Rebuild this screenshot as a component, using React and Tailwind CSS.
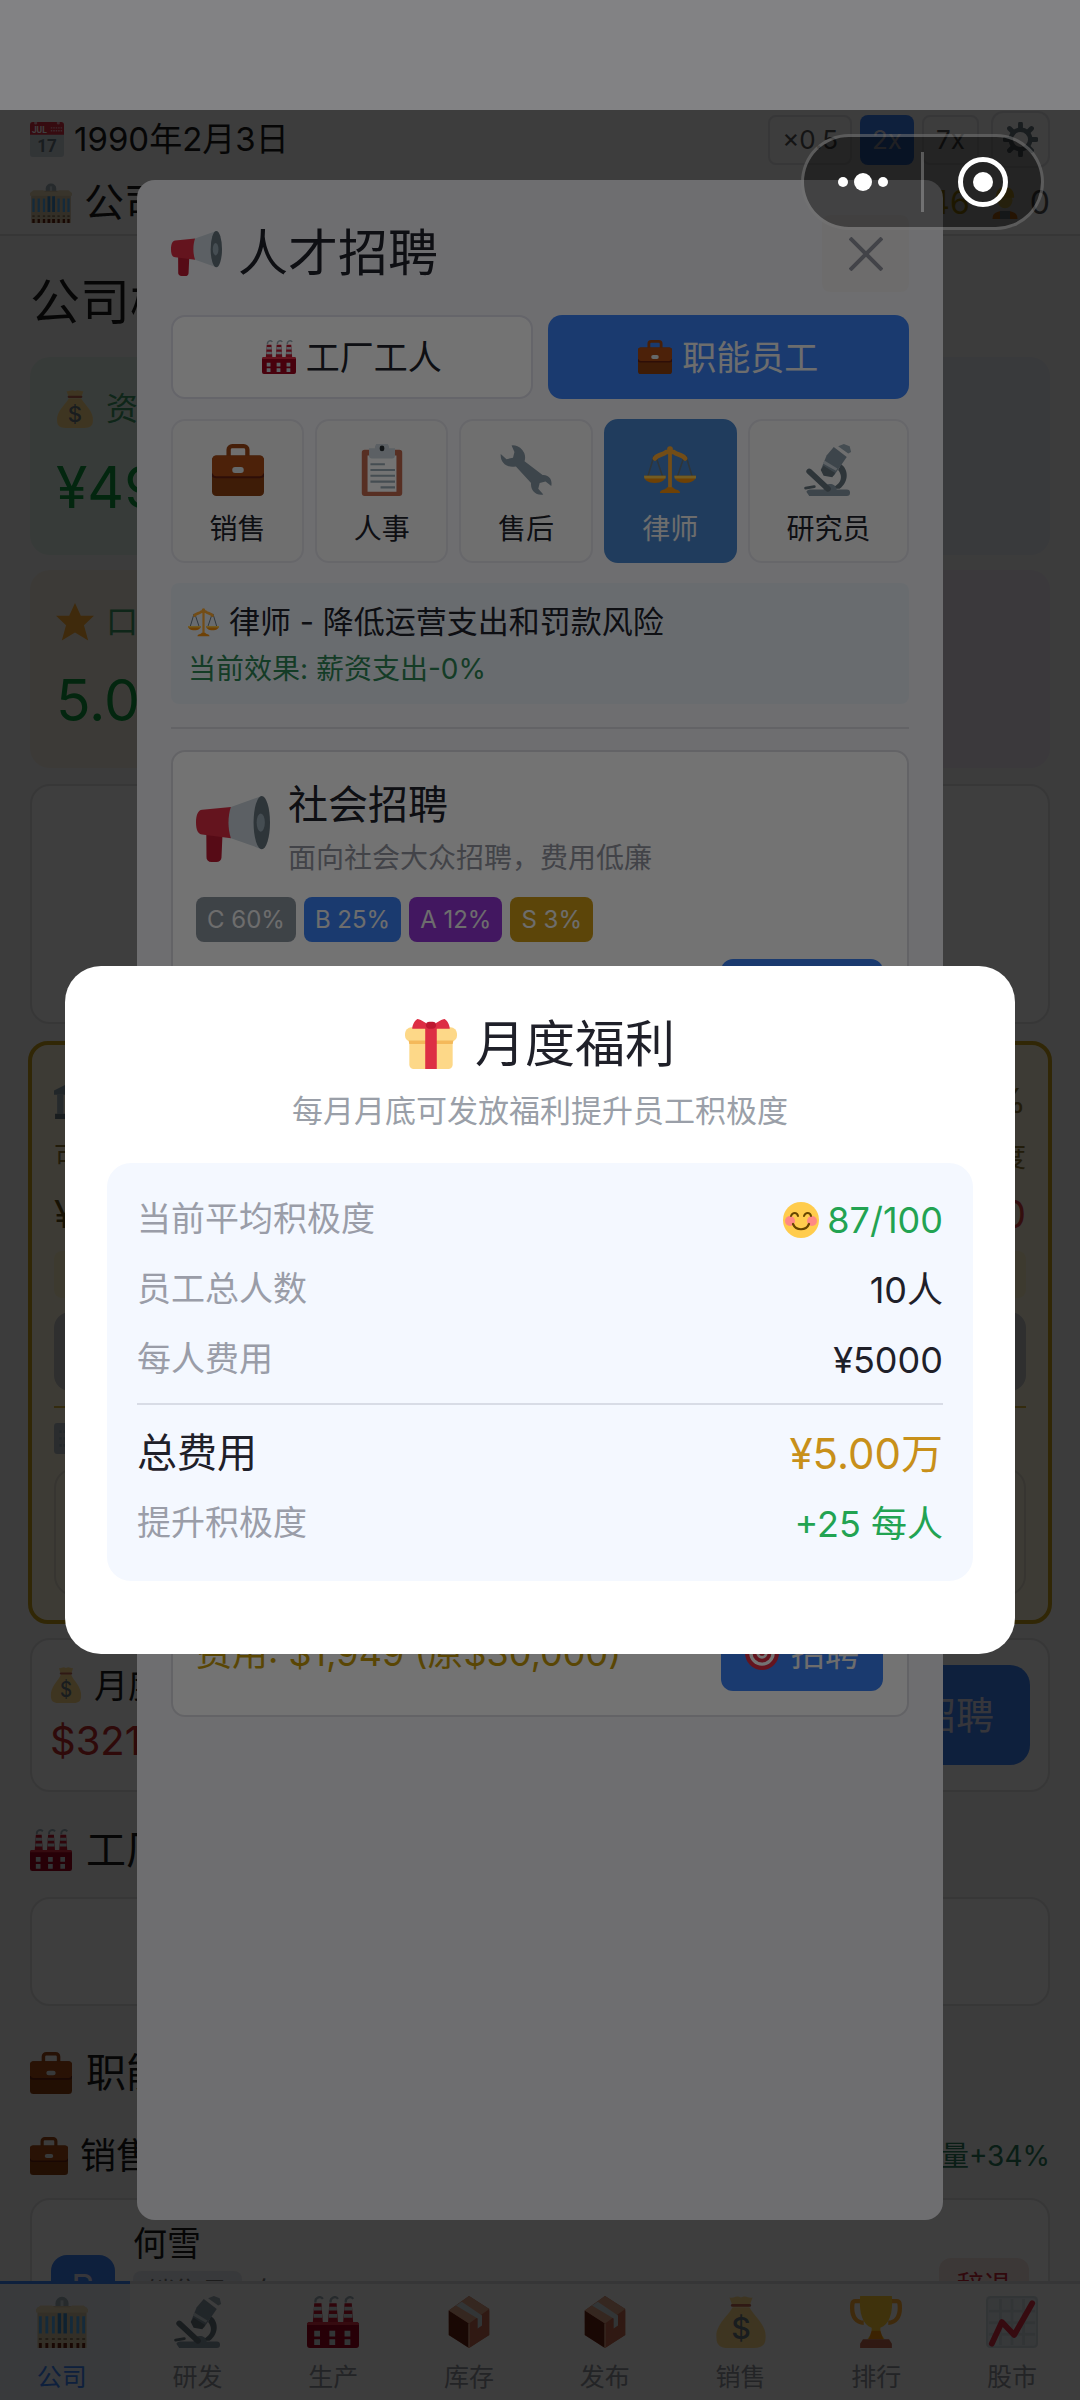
import { useState } from 'react';

const ICONS = {
  calendar: (
    <>
      <rect x="0" y="6" width="36" height="30" rx="3" fill="#ccd6dd" />
      <path d="M3 0h30a3 3 0 0 1 3 3v10H0V3a3 3 0 0 1 3-3z" fill="#dd2e44" />
      <circle cx="6" cy="1" r="1.6" fill="#f4abba" />
      <circle cx="30" cy="1" r="1.6" fill="#f4abba" />
      <path d="M22 6h12M22 9h12" stroke="#f4abba" strokeWidth="1.4" strokeDasharray="1.6 1" />
      <text x="2" y="11.5" fontSize="9" fontWeight="bold" fill="#fff" fontFamily="Roboto, sans-serif">JUL</text>
      <text x="18" y="31" fontSize="18" fontWeight="bold" textAnchor="middle" fill="#66757f" fontFamily="Roboto, sans-serif">17</text>
    </>
  ),
  building: (
    <>
      <path d="M13.500 8V5a4.500 4.500 0 0 1 9 0v3z" fill="#99aab5" />
      <path d="M17 3h2v5h-2z" fill="#ccd6dd" />
      <path d="M1 8l10-1h14l10 1v28H1z" fill="#d0c0a0" />
      <path d="M0 9l3-2.500h8L13 8h10l2-1.500h8L36 9v2.500H0z" fill="#e4d4b0" />
      <path d="M2 14h2v12H2zM6.500 14h2v12h-2zM11 14h2v12h-2zM23.500 14h2v12h-2zM28 14h2v12h-2zM32 14h2v12h-2z" fill="#55acee" />
      <path d="M15 12h2.400v14H15zM19 12h2.400v14H19z" fill="#3b88c3" />
      <path d="M2 29h2v1.500H2zM6.500 29h2v1.500h-2zM11 29h2v1.500h-2zM15 29h2.400v1.500H15zM19 29h2.400v1.500H19zM23.500 29h2v1.500h-2zM28 29h2v1.500h-2zM32 29h2v1.500h-2z" fill="#8c7a60" />
      <path d="M2 32.500h2V36H2zM6.500 32.500h2V36h-2zM11 32.500h2V36h-2zM15 32.500h2.400V36H15zM19 32.500h2.400V36H19zM23.500 32.500h2V36h-2zM28 32.500h2V36h-2zM32 32.500h2V36h-2z" fill="#662113" />
    </>
  ),
  megaphone: (
    <>
      <path d="M5 18h8l-.6 15.500a2.500 2.500 0 0 1-2.500 2.500H7.500a2.500 2.500 0 0 1-2.400-2.800z" fill="#be1931" />
      <path d="M3 7.500l14-1.500v17L3 21C1 21 0 18.500 0 14.500s1-7 3-7z" fill="#dd2e44" />
      <path d="M17 6L32 0v29L17 23c-1.600-5-1.600-12 0-17z" fill="#ccd6dd" />
      <ellipse cx="32" cy="14.500" rx="4" ry="14.500" fill="#66757f" />
      <ellipse cx="31.500" cy="14.500" rx="2" ry="5" fill="#99aab5" />
    </>
  ),
  factory: (
    <>
      <path d="M5 5h5l1 14H4zM15.500 5h5l1 14h-7zM26 5h5l1 14h-7z" fill="#be1931" />
      <path d="M4.800 7.500h5.400V10H4.800zM4.600 12.500h5.800V15H4.600zM15.300 7.500h5.400V10h-5.400zM15.100 12.500h5.800V15h-5.800zM25.800 7.500h5.400V10h-5.400zM25.600 12.500h5.800V15h-5.800z" fill="#ccd6dd" />
      <path d="M6 4.500c-1-3 3-5 5-2.500M16.500 4.500c-1-3 3-5 5-2.500M27 4.500c-1-3 3-5 5-2.500" stroke="#99aab5" strokeWidth="1.600" fill="none" />
      <rect y="18" width="36" height="18" rx="2" fill="#a0041e" />
      <path d="M0 20a2 2 0 0 1 2-2h32a2 2 0 0 1 2 2z" fill="#dd2e44" />
      <path d="M5 24h4v4H5zM15.500 24h4v4h-4zM26 24h4v4h-4zM5 30h4v4H5zM15.500 30h4v4h-4zM26 30h4v4h-4z" fill="#ccd6dd" />
    </>
  ),
  briefcase: (
    <>
      <path d="M11.500 9V4a2.500 2.500 0 0 1 2.500-2.500h8A2.500 2.500 0 0 1 24.500 4v5" stroke="#9c4616" strokeWidth="3" fill="none" />
      <rect y="8" width="36" height="28" rx="3" fill="#8a3e10" />
      <path d="M0 11a3 3 0 0 1 3-3h30a3 3 0 0 1 3 3v10c0 1.500-1.500 2-3 2H3c-1.500 0-3-.5-3-2z" fill="#a84a16" />
      <path d="M0 20.500c0 2 1.500 2.500 3 2.500h30c1.500 0 3-.5 3-2.500" stroke="#662113" strokeWidth="1.400" fill="none" />
      <rect x="14" y="16" width="8" height="4" rx="2" fill="#e1e8ed" />
    </>
  ),
  clipboard: (
    <>
      <rect x="4" y="4" width="28" height="32" rx="2" fill="#c1694f" />
      <path d="M8 8h20v25H8z" fill="#fff" />
      <path d="M9 3h4a5 5 0 0 1 10 0h4v5a2 2 0 0 1-2 2H11a2 2 0 0 1-2-2z" fill="#ccd6dd" />
      <rect x="16.400" y="1" width="3.200" height="4" rx="1.600" fill="#292f33" />
      <path d="M10 14h10M10 18h17M10 22h17M10 26h17M17 30h10" stroke="#99aab5" strokeWidth="1.500" />
    </>
  ),
  wrench: (
    <>
      <path
        d="M8 1a8.500 8.500 0 0 1 9 11l12.500 9.500c4-.5 7 3 6 7.500l-4-3-4 1-1 4 3.500 4c-5 1-9-2.500-8.500-8L11 15.500C5 17 0 13 .5 7l4 3.500 4.500-1 1-4z"
        fill="#8899a6"
      />
    </>
  ),
  scales: (
    <>
      <path d="M7 8L2.500 23M8 8l5 15M28 8l-5 15M29 8l4.500 15" stroke="#66757f" strokeWidth="1.100" />
      <path d="M7.500 10c2-3 5-2 8-4.500h5c3 2.500 6 1.500 8 4.500" stroke="#ffac33" strokeWidth="3.200" fill="none" strokeLinecap="round" />
      <circle cx="18" cy="3.500" r="2" fill="#ffac33" />
      <path d="M16.700 3h2.600v28h-2.600z" fill="#ffac33" />
      <path d="M0 22h15c0 3-3 5-7.500 5S0 25 0 22zM21 22h15c0 3-3 5-7.500 5S21 25 21 22z" fill="#f4900c" />
      <path d="M0 22h15v1.800H.3zM21 22h15v1.800H21.300z" fill="#ffcc4d" />
      <path d="M11 34c0-2.500 4-2 5-4h4c1 2 5 1.500 5 4z" fill="#f4900c" />
    </>
  ),
  microscope: (
    <>
      <path d="M27 14c5 3 6 12-1 17h-8c9-2 11-8 7-13z" fill="#66757f" />
      <path d="M3 33a3 3 0 0 1 3-1.500h9c1-5 8-5 9 0h7a2.200 2.200 0 0 1 0 4.500H5z" fill="#8899a6" />
      <path d="M5 19l13 12" stroke="#66757f" strokeWidth="4" strokeLinecap="round" />
      <path d="M2.500 30.500l6-1" stroke="#66757f" strokeWidth="2" strokeLinecap="round" />
      <path d="M17 8l5-6 9 7-9 13-9-4z" fill="#8899a6" />
      <path d="M13 18l2-3 8 5-2 3-6-1z" fill="#66757f" />
      <path d="M14.500 13.500l9 5 1-1.500-9-5.500z" fill="#ccd6dd" />
      <path d="M25 1.500l7 5 2-1-1-4-4-1.500z" fill="#99aab5" />
    </>
  ),
  box: (
    <>
      <path d="M18 0l14 9v18L18 36 4 27V10z" fill="#c1694f" />
      <path d="M4 10l14 9v17L4 27z" fill="#662113" />
      <path d="M18 19l14-9v17l-14 9z" fill="#c1694f" />
      <path d="M18 0l14 9-14 10L4 10z" fill="#d99e82" />
      <path d="M9 6.500l4-2.500 14 9.500v7l-3 2v-7z" fill="#ccd6dd" />
      <path d="M18 19v17" stroke="#d99e82" strokeWidth="1" />
    </>
  ),
  money: (
    <>
      <path d="M10 1c3 1 4-2 8 0 4-2 5 1 8 0l-2.500 7h-11z" fill="#fdd888" />
      <path d="M12 8h12c2 5 12 12 11 21 0 5-3 7-8 7H9c-5 0-8-2-8-7C0 20 10 13 12 8z" fill="#fdd888" />
      <path d="M12 6.500h12" stroke="#bf6952" strokeWidth="2" strokeLinecap="round" />
      <text x="18" y="30" fontSize="21" fontWeight="500" textAnchor="middle" fill="#67757f" fontFamily="Inter, sans-serif">$</text>
    </>
  ),
  trophy: (
    <>
      <path d="M8 3.500H3.500c-2 0-2 2-2 5 0 6 3 10 8 10M28 3.500h4.500c2 0 2 2 2 5 0 6-3 10-8 10" stroke="#ffac33" strokeWidth="3" fill="none" />
      <path d="M7 0h22c1 12-2 20-8 22v4l3 4H12l3-4v-4C9 20 6 12 7 0z" fill="#ffcc33" />
      <path d="M15 24h6l2 6H13z" fill="#f4900c" />
      <path d="M9 30h18l2 3v3H7v-3z" fill="#c1694f" />
    </>
  ),
  chart: (
    <>
      <rect width="36" height="36" rx="3" fill="#ccd6dd" />
      <rect x="1.500" y="1.500" width="33" height="33" rx="2" fill="#e1e8ed" />
      <path d="M2 10.500h32M2 18.500h32M2 26.500h32M10 2v32M18 2v32M26 2v32" stroke="#ccd6dd" strokeWidth="2" />
      <path d="M4 33l7-15 8.500 9L32 5" stroke="#dd2e44" strokeWidth="4" fill="none" strokeLinecap="round" strokeLinejoin="round" />
    </>
  ),
  gift: (
    <>
      <path d="M3 14h30v19a3 3 0 0 1-3 3H6a3 3 0 0 1-3-3z" fill="#fdd888" />
      <rect y="6" width="36" height="10.500" rx="4.500" fill="#fdd888" />
      <path d="M2.500 15.500h31L33 18H3z" fill="#f4b95a" />
      <path d="M18 7H5C5 4 7 1 8.500 0 11 0 14 3 18 5c4-2 7-5 9.500-5C29 1 31 4 31 7z" fill="#dd2e44" />
      <path d="M14 5h8v31h-8z" fill="#dd2e44" />
      <rect x="14.500" y="2" width="7" height="5" rx="2.500" fill="#be1931" />
    </>
  ),
  smile: (
    <>
      <circle cx="18" cy="18" r="18" fill="#ffcc4d" />
      <circle cx="7" cy="19" r="5" fill="#ff7892" opacity=".8" />
      <circle cx="29" cy="19" r="5" fill="#ff7892" opacity=".8" />
      <path d="M8 14c1.500-4 6-4 7 0M21 14c1.500-4 6-4 7 0" stroke="#664500" strokeWidth="2" fill="none" strokeLinecap="round" />
      <path d="M10 22c3 7 13 7 16 0" stroke="#664500" strokeWidth="2.200" fill="none" strokeLinecap="round" />
    </>
  ),
  target: (
    <>
      <circle cx="18" cy="18" r="18" fill="#dd2e44" />
      <circle cx="18" cy="18" r="13.500" fill="#fff" />
      <circle cx="18" cy="18" r="10" fill="#dd2e44" />
      <circle cx="18" cy="18" r="6" fill="#fff" />
      <circle cx="18" cy="18" r="3" fill="#dd2e44" />
    </>
  ),
  star: <path d="M18 0l5.500 12H36l-9.500 9 4 14.500L18 28 5.500 35.500l4-14.500L0 12h12.500z" fill="#ffac33" />,
  bank: (
    <>
      <path d="M18 0l18 9v4H0V9z" fill="#8899a6" />
      <path d="M3 13h6v18H3zM15 13h6v18h-6zM27 13h6v18h-6z" fill="#99aab5" />
      <path d="M1 31h34v5H1z" fill="#66757f" />
    </>
  ),
  worker: (
    <>
      <path d="M3 36c0-7 5-9 15-9s15 2 15 9z" fill="#ff8a1c" />
      <path d="M12 27h12v9H12z" fill="#8fa3b0" />
      <circle cx="18" cy="15" r="9" fill="#ffdc5d" />
      <path d="M7 12C7 4 11 0 18 0s11 4 11 12z" fill="#ffcc33" />
    </>
  ),
  gear: (
    <>
      <path
        d="M18 2v32M2 18h32M6.700 6.700l22.600 22.600M29.300 6.700L6.700 29.300"
        stroke="#66757f"
        strokeWidth="5"
        strokeLinecap="round"
      />
      <circle cx="18" cy="18" r="10" fill="#f8f8f8" stroke="#66757f" strokeWidth="4.500" />
    </>
  ),
  list: (
    <>
      <rect width="36" height="36" rx="4" fill="#a9b5bb" />
      <path d="M7 10h22M7 18h22M7 26h22" stroke="#8c9eaa" strokeWidth="3" strokeDasharray="3 2" />
    </>
  ),
};

function Icon({ name, className }) {
  return (
    <svg viewBox="0 0 36 36" preserveAspectRatio="none" aria-hidden="true" className={`shrink-0 ${className}`}>
      {ICONS[name]}
    </svg>
  );
}

const ROLES = [
  { icon: 'briefcase', label: '销售' },
  { icon: 'clipboard', label: '人事' },
  { icon: 'wrench', label: '售后' },
  { icon: 'scales', label: '律师' },
  { icon: 'microscope', label: '研究员' },
];

const CHANNELS = [
  { name: '社会招聘', desc: '面向社会大众招聘，费用低廉', cost: '费用: $325 (原$5,000)' },
  { name: '校园招聘', desc: '面向高校毕业生招聘', cost: '费用: $974 (原$15,000)' },
  { name: '猎头招聘', desc: '专业猎头推荐人才', cost: '费用: $1,949 (原$30,000)' },
];

const GRADES = [
  { label: 'C 60%', color: 'bg-[#8b949e]' },
  { label: 'B 25%', color: 'bg-[#3b82f6]' },
  { label: 'A 12%', color: 'bg-[#9333d6]' },
  { label: 'S 3%', color: 'bg-[#cc9a16]' },
];

const NAV = [
  { icon: 'building', label: '公司' },
  { icon: 'microscope', label: '研发' },
  { icon: 'factory', label: '生产' },
  { icon: 'box', label: '库存' },
  { icon: 'box', label: '发布' },
  { icon: 'money', label: '销售' },
  { icon: 'trophy', label: '排行' },
  { icon: 'chart', label: '股市' },
];

function Header() {
  return (
    <header className="shrink-0 border-b-2 border-[#dcdcdc] bg-[#f6f6f6] px-[30px] pt-px">
      <div className="flex h-[57px] items-center justify-between">
        <div className="flex items-center gap-[10px] text-[33px]">
          <Icon name="calendar" className="h-[35px] w-[34px]" />
          1990年2月3日
        </div>
        <div className="flex items-center gap-2 text-[26px] text-[#555]">
          <button className="h-[50px] rounded-lg border-2 border-[#dedee2] px-3">×0.5</button>
          <button className="h-[50px] rounded-lg bg-[#3b82f6] px-3 text-[#dde]">2x</button>
          <button className="h-[50px] rounded-lg border-2 border-[#dedee2] px-3">7x</button>
          <button aria-label="设置" className="ml-1 flex h-[57px] w-[59px] items-center justify-center rounded-xl border-2 border-[#dedee2]">
            <Icon name="gear" className="size-[35px]" />
          </button>
        </div>
      </div>
      <div className="mt-1 flex h-[62px] items-center justify-between">
        <div className="flex items-center gap-3 text-[40px]">
          <Icon name="building" className="h-[40px] w-[42px]" />
          公司
        </div>
        <div className="flex items-center text-[32px]">
          <span className="text-[#c8a000]">46</span>
          <Icon name="worker" className="ml-5 h-[32px] w-[30px]" />
          <span className="ml-[10px] text-[#555]">0</span>
        </div>
      </div>
    </header>
  );
}

function StatCard({ icon, label, value, tone }) {
  return (
    <div className={`rounded-[20px] px-[26px] pt-7 pb-[35px] ${tone}`}>
      <div className="flex h-12 items-center gap-3 text-[32px] text-[#3f9d68]">
        {icon && <Icon name={icon} className="size-[38px]" />}
        {label}
      </div>
      <div className="mt-[23px] h-16 text-[57px] leading-[64px] text-[#0f9d40]">{value}</div>
    </div>
  );
}

function LoanCard() {
  return (
    <section className="-mx-0.5 mt-[17px] shrink-0 rounded-[20px] border-4 border-[#c79f1c] bg-[#f8efd9] px-[22px] pt-[23px] pb-6">
      <div className="flex h-16 items-center justify-between text-[34px] text-[#8a7430]">
        <Icon name="bank" className="size-[38px]" />
        <span>5%</span>
      </div>
      <div className="flex h-[50px] items-center justify-between text-[28px] text-[#8a7430]">
        <span>可贷</span>
        <span>额度</span>
      </div>
      <div className="flex h-16 items-center justify-between text-[38px]">
        <span className="text-[#5f4c12]">¥0</span>
        <span className="text-[#d33a3a]">¥0</span>
      </div>
      <div className="mt-[5px] h-[47px] rounded-lg bg-[#f8edbf]" />
      <button aria-label="贷款" disabled className="mt-[14px] block h-[79px] w-full rounded-2xl bg-[#bdbdbd]" />
      <div className="mt-[15px] border-t-2 border-[#d2ad3c]" />
      <div className="flex h-[60px] items-center">
        <Icon name="list" className="h-[31px] w-[28px]" />
      </div>
      <div className="h-32 rounded-[20px] border-2 border-[#ded8c6]" />
    </section>
  );
}

function CompanyPage() {
  return (
    <main className="flex min-h-0 flex-1 flex-col overflow-hidden bg-[#f3f3f3] px-[30px]">
      <h1 className="mt-8 h-[68px] shrink-0 text-[50px] leading-[68px]">公司概况</h1>
      <div className="mt-[21px] grid shrink-0 grid-cols-2 gap-[15px]">
        <StatCard icon="money" label="资金" value="¥49.8万" tone="bg-[#e0f0e7]" />
        <StatCard tone="bg-[#e6e9f3]" />
        <StatCard icon="star" label="口碑" value="5.0" tone="bg-[#f4ece0]" />
        <StatCard tone="bg-[#efe6f3]" />
      </div>
      <div className="mt-4 h-60 shrink-0 rounded-[20px] border-2 border-[#dedee0] bg-[#fbfbfb]" />
      <LoanCard />

      <section className="mt-[14px] flex shrink-0 items-center justify-between rounded-[20px] border-2 border-[#dedee0] bg-[#fbfbfb] px-[18px] py-[19px]">
        <div>
          <div className="flex h-[52px] items-center gap-3 text-[34px]">
            <Icon name="money" className="h-[36px] w-[32px]" />
            月度薪资
          </div>
          <div className="h-[60px] text-[40px] leading-[60px] text-[#c02c2c]">$321</div>
        </div>
        <button className="h-[100px] rounded-[20px] bg-[#3b82f6] px-9 text-[38px] text-[#dde]">招聘</button>
      </section>

      <h2 className="mt-7 flex h-[60px] shrink-0 items-center gap-[14px] text-[40px]">
        <Icon name="factory" className="size-[42px]" />
        工厂工人
      </h2>
      <div className="mt-[17px] h-[109px] shrink-0 rounded-[20px] border-2 border-[#dedee0] bg-[#fbfbfb]" />

      <h2 className="mt-[37px] flex h-[60px] shrink-0 items-center gap-[14px] text-[40px]">
        <Icon name="briefcase" className="size-[42px]" />
        职能员工
      </h2>
      <div className="mt-[23px] flex h-[60px] shrink-0 items-center justify-between">
        <h3 className="flex items-center gap-3 text-[36px]">
          <Icon name="briefcase" className="size-[38px]" />
          销售
        </h3>
        <span className="text-[28px] text-[#2a7a5a]">销量+34%</span>
      </div>
      <div className="mt-3 flex shrink-0 items-center rounded-[20px] border-2 border-[#dedee0] bg-[#fbfbfb] px-[19px] py-[22px]">
        <div className="flex size-16 items-center justify-center rounded-2xl bg-[#3b82f6] text-[36px] text-[#dde]">B</div>
        <div className="ml-[18px] flex-1">
          <div className="h-11 text-[34px] leading-[44px]">何雪</div>
          <div className="mt-[5px] flex h-11 items-center gap-[10px] text-[27px] text-[#777]">
            <span className="rounded-lg bg-[#e4e8ee] px-[14px] leading-[44px]">销售员</span>
            <span>女</span>
          </div>
          <div className="h-9" />
        </div>
        <button className="h-[58px] rounded-xl bg-[#f5e2e0] px-[18px] text-[27px] text-[#c82838]">辞退</button>
      </div>
    </main>
  );
}

function BottomNav() {
  return (
    <nav className="-ml-1.5 grid shrink-0 grid-cols-8 bg-[#f6f6f6]">
      {NAV.map((item, i) => (
        <a
          key={item.label + i}
          href="#"
          className={`flex flex-col items-center border-t-[3px] pt-3 pb-[5px] text-[25px] ${
            i === 0 ? 'border-[#3b82f6] bg-[#e6ebf2] text-[#3b82f6]' : 'border-[#dcdcde] text-[#90939c]'
          }`}
        >
          <Icon name={item.icon} className="size-[52px]" />
          <span className="mt-[11px] leading-9">{item.label}</span>
        </a>
      ))}
    </nav>
  );
}

function ChannelCard({ name, desc, cost }) {
  return (
    <section className="rounded-[14px] border-2 border-[#dcdce2] bg-white p-6 pl-[23px]">
      <div className="flex items-center gap-[18px]">
        <Icon name="megaphone" className="h-[66px] w-[74px]" />
        <div>
          <h3 className="h-14 text-[40px] leading-[58px]">{name}</h3>
          <p className="h-[50px] text-[28px] leading-[52px] text-[#93969f]">{desc}</p>
        </div>
      </div>
      <div className="mt-[15px] flex gap-2">
        {GRADES.map((g) => (
          <span key={g.label} className={`h-[45px] rounded-lg px-[11px] text-[24px] leading-[45px] text-[#f2f2f2] ${g.color}`}>
            {g.label}
          </span>
        ))}
      </div>
      <div className="mt-[17px] flex items-center justify-between">
        <span className="text-[36px] text-[#c89c0a]">{cost}</span>
        <button className="flex h-[76px] items-center gap-3 rounded-xl bg-[#3b82f6] px-6 text-[34px] text-[#f2f2f2]">
          <Icon name="target" className="size-[34px]" />
          招聘
        </button>
      </div>
    </section>
  );
}

function RecruitModal() {
  const [role, setRole] = useState('律师');

  return (
    <div className="absolute inset-0 bg-black/45 px-[137px] pt-[70px] pb-[180px]">
      <div role="dialog" aria-label="人才招聘" className="h-full overflow-hidden rounded-[18px] bg-[#f4f4f9] px-[34px] pt-[35px] text-[#20222c]">
        <div className="flex h-[77px] items-center justify-between">
          <h2 className="flex items-center gap-4 text-[50px]">
            <Icon name="megaphone" className="h-[45px] w-[51px]" />
            人才招聘
          </h2>
          <button aria-label="关闭" className="flex h-[77px] w-[87px] items-center justify-center rounded-lg bg-[#f1f0f0]">
            <svg viewBox="0 0 34 34" className="size-[34px]">
              <path d="M1 1l32 32M33 1L1 33" stroke="#93949f" strokeWidth="4" />
            </svg>
          </button>
        </div>

        <div className="mt-[23px] grid grid-cols-2 gap-[15px] text-[34px]">
          <button className="flex h-[84px] items-center justify-center gap-[10px] rounded-[14px] border-2 border-[#e0e0ea] bg-white">
            <Icon name="factory" className="size-[34px]" />
            工厂工人
          </button>
          <button className="flex h-[84px] items-center justify-center gap-[10px] rounded-[14px] bg-[#3b82f6] text-[#f2f2f2]">
            <Icon name="briefcase" className="size-[34px]" />
            职能员工
          </button>
        </div>

        <div className="mt-5 flex gap-[11px] text-[28px]">
          {ROLES.map((r) => (
            <button
              key={r.label}
              onClick={() => setRole(r.label)}
              className={`flex flex-auto flex-col items-center rounded-[14px] border-2 pt-[23px] pb-3 ${
                r.label === role ? 'border-[#4886ce] bg-[#4886ce] text-[#f2f2f2]' : 'border-[#e4e4ec] bg-[#f7f7f7]'
              }`}
            >
              <Icon name={r.icon} className="size-[52px]" />
              <span className="mt-[13px] leading-10">{r.label}</span>
            </button>
          ))}
        </div>

        <div className="mt-5 rounded-lg bg-[#e9eff7] px-[17px] pt-4 pb-[11px]">
          <p className="flex h-[46px] items-center gap-[10px] text-[31px]">
            <Icon name="scales" className="size-[31px]" />
            律师 - 降低运营支出和罚款风险
          </p>
          <p className="h-12 text-[28px] leading-[48px] text-[#2e8655]">当前效果: 薪资支出-0%</p>
        </div>

        <div className="mt-[23px] flex flex-col gap-[17px] border-t-2 border-[#dcdce2] pt-[21px]">
          {CHANNELS.map((c) => (
            <ChannelCard key={c.name} {...c} />
          ))}
        </div>
      </div>
    </div>
  );
}

function Row({ label, children, valueClass }) {
  return (
    <div className="flex h-[70px] items-center justify-between">
      <dt className="pb-1 text-[34px] text-[#9a9da8]">{label}</dt>
      <dd className={`flex items-center gap-2 text-[36px] ${valueClass}`}>{children}</dd>
    </div>
  );
}

function WelfareDialog() {
  return (
    <div className="absolute inset-0 flex items-center bg-black/55 px-[65px] pt-[110px]">
      <div role="dialog" aria-label="月度福利" className="w-full rounded-[36px] bg-white px-[42px] pt-11 pb-[73px] text-[#1f2029]">
        <h2 className="flex h-[68px] items-center justify-center gap-[18px] text-[50px]">
          <Icon name="gift" className="h-[50px] w-[52px]" />
          月度福利
        </h2>
        <p className="mt-[10px] h-[46px] text-center text-[31px] leading-[46px] text-[#9a9fa8]">
          每月月底可发放福利提升员工积极度
        </p>
        <dl className="mt-[29px] rounded-[24px] bg-[#f4f8ff] px-[30px] py-[22px]">
          <Row label="当前平均积极度" valueClass="text-[#22a352]">
            <Icon name="smile" className="size-[36px]" />
            87/100
          </Row>
          <Row label="员工总人数">10人</Row>
          <Row label="每人费用">¥5000</Row>
          <div className="mt-2 mb-3 border-t-2 border-[#d8dce6]" />
          <div className="flex h-[72px] items-center justify-between text-[40px]">
            <dt>总费用</dt>
            <dd className="text-[42px] text-[#c8901a]">¥5.00万</dd>
          </div>
          <Row label="提升积极度" valueClass="text-[#22a352]">+25 每人</Row>
        </dl>
      </div>
    </div>
  );
}

function Capsule() {
  return (
    <div className="absolute top-6 right-9 flex h-[96px] w-[243px] items-center rounded-full border-[3px] border-white/25 bg-black/40 text-white">
      <button aria-label="更多" className="flex flex-1 items-center justify-center gap-1.5">
        <span className="size-[10px] rounded-full bg-white" />
        <span className="size-[18px] rounded-full bg-white" />
        <span className="size-[10px] rounded-full bg-white" />
      </button>
      <span className="h-[60px] w-[3px] bg-white/25" />
      <button aria-label="退出" className="flex flex-1 items-center justify-center">
        <span className="flex size-[50px] items-center justify-center rounded-full border-[5px] border-white">
          <span className="size-5 rounded-full bg-white" />
        </span>
      </button>
    </div>
  );
}

export default function App() {
  return (
    <div className="flex h-screen flex-col overflow-hidden bg-[#828284] font-[Inter,'Noto_Sans_CJK_SC',sans-serif] text-[#1c1c1c]">
      <div className="h-[110px] shrink-0" />
      <div className="relative flex min-h-0 flex-1 flex-col">
        <Header />
        <CompanyPage />
        <BottomNav />
        <RecruitModal />
        <WelfareDialog />
        <Capsule />
      </div>
    </div>
  );
}
